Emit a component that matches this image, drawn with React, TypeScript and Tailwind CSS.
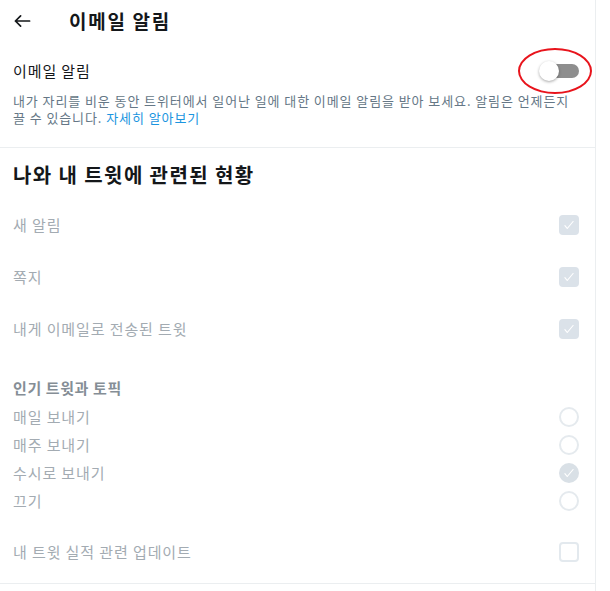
const font = { fontFamily: '"Noto Sans CJK KR", "Noto Sans", sans-serif' }

function Check() {
  return (
    <svg viewBox="0 0 24 24" className="w-[14px] h-[14px]" fill="none" stroke="white" strokeWidth="2" strokeLinecap="round" strokeLinejoin="round">
      <path d="M5 13l4 5L19 6" />
    </svg>
  )
}

function CheckBox({ checked }: { checked: boolean }) {
  return checked ? (
    <div className="w-5 h-5 rounded-[4px] bg-[#dbe2e9] flex items-center justify-center">
      <Check />
    </div>
  ) : (
    <div className="w-5 h-5 rounded-[4px] border-2 border-[#e3e9ee]" />
  )
}

function Radio({ checked }: { checked: boolean }) {
  return checked ? (
    <div className="w-5 h-5 rounded-full bg-[#d9e0e6] flex items-center justify-center">
      <Check />
    </div>
  ) : (
    <div className="w-5 h-5 rounded-full border-2 border-[#e5eaee]" />
  )
}

const checkRows = [
  { label: '새 알림', checked: true },
  { label: '쪽지', checked: true },
  { label: '내게 이메일로 전송된 트윗', checked: true },
]

const radioRows = [
  { label: '매일 보내기', checked: false },
  { label: '매주 보내기', checked: false },
  { label: '수시로 보내기', checked: true },
  { label: '끄기', checked: false },
]

export default function App() {
  return (
    <div className="w-[596px] min-h-screen bg-white border-r border-[#ebeef0] text-[#14171a]" style={font}>
      {/* Header */}
      <div className="h-[41px] flex items-center">
        <div className="w-[69px] pl-[14px] flex items-center">
          <svg viewBox="0 0 18 14" className="w-[17px] h-[14px]" fill="none" stroke="#14171a" strokeWidth="1.8" strokeLinecap="round" strokeLinejoin="round">
            <path d="M16.5 7H1.5M7 1.5L1.5 7L7 12.5" />
          </svg>
        </div>
        <h1 className="text-[19px] font-bold leading-none tracking-[0.09em]">이메일 알림</h1>
      </div>

      {/* Email toggle */}
      <div className="px-[13px] pt-[15px] pb-[21px] border-b border-[#ebeef0]">
        <div className="h-[30px] flex items-center justify-between">
          <span className="text-[15px] tracking-[0.06em]">이메일 알림</span>
          <div className="relative mr-[3px] w-[40px] h-[20px] flex items-center">
            <div className="w-[38px] h-[14px] ml-[2px] rounded-full bg-[#8e8e8e]" />
            <div className="absolute left-0 top-0 w-5 h-5 rounded-full bg-white shadow-[0_1px_3px_rgba(0,0,0,0.35)]" />
            <div className="absolute -left-[21px] -top-[13px] w-[74px] h-[46px] rounded-[50%] border-2 border-[#e8141c]" />
          </div>
        </div>
        <p className="mt-[6px] text-[13px] leading-[17px] tracking-[0.07em] text-[#657786] whitespace-nowrap">
          내가 자리를 비운 동안 트위터에서 일어난 일에 대한 이메일 알림을 받아 보세요. 알림은 언제든지
          <br />
          끌 수 있습니다. <span className="text-[#1b95e0]">자세히 알아보기</span>
        </p>
      </div>

      {/* Activity section */}
      <div className="px-[13px] pr-[16px] border-b border-[#ebeef0]">
        <h2 className="mt-[13px] h-[28px] flex items-center text-[20px] font-bold tracking-[0.07em]">나와 내 트윗에 관련된 현황</h2>
        <div className="mt-[10px]">
          {checkRows.map((r) => (
            <div key={r.label} className="h-[52px] flex items-center justify-between">
              <span className="text-[15px] tracking-[0.06em] text-[#a3abb2]">{r.label}</span>
              <CheckBox checked={r.checked} />
            </div>
          ))}
        </div>
        <div className="mt-[23px] h-5 flex items-center text-[15px] font-bold tracking-[0.04em] text-[#858e96]">인기 트윗과 토픽</div>
        <div className="mt-[5px]">
          {radioRows.map((r) => (
            <div key={r.label} className="h-[28px] flex items-center justify-between">
              <span className="text-[15px] tracking-[0.06em] text-[#a3abb2]">{r.label}</span>
              <Radio checked={r.checked} />
            </div>
          ))}
        </div>
        <div className="mt-[11px] mb-[5px] h-[52px] flex items-center justify-between">
          <span className="text-[15px] tracking-[0.06em] text-[#a3abb2]">내 트윗 실적 관련 업데이트</span>
          <CheckBox checked={false} />
        </div>
      </div>
    </div>
  )
}
